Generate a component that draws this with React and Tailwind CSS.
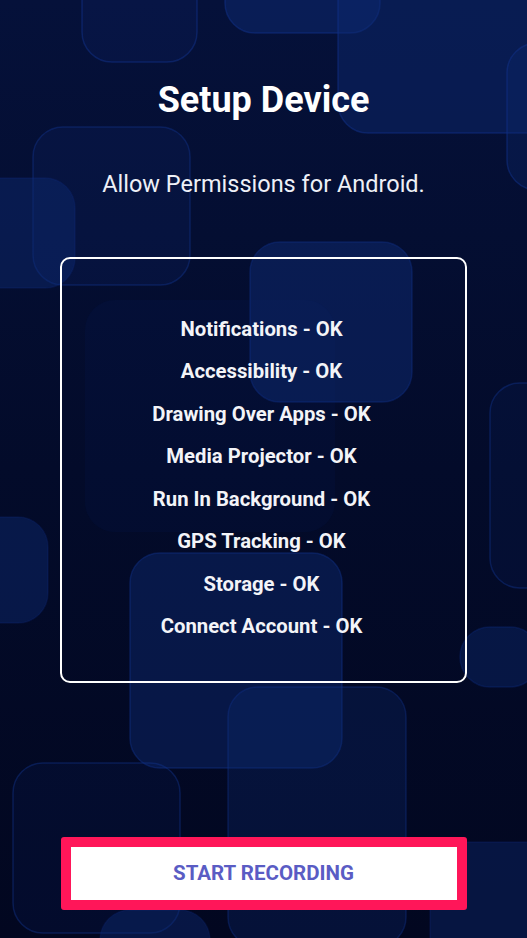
import React from "react";

const permissions = [
  "Notifications",
  "Accessibility",
  "Drawing Over Apps",
  "Media Projector",
  "Run In Background",
  "GPS Tracking",
  "Storage",
  "Connect Account",
];

// decorative rounded squares behind the content
const tiles = [
  { x: 82, y: -40, w: 115, h: 102, o: 0.2, s: 0.5 },
  { x: 225, y: -60, w: 155, h: 93, o: 0.5, s: 0.5 },
  { x: 338, y: -60, w: 240, h: 193, o: 0.45, s: 0.5 },
  { x: 507, y: 43, w: 60, h: 147, o: 0.3, s: 0.5 },
  { x: 33, y: 127, w: 157, h: 158, o: 0.2, s: 0.45 },
  { x: -40, y: 178, w: 115, h: 110, o: 0.45, s: 0.2 },
  { x: 250, y: 242, w: 162, h: 160, o: 0.5, s: 0.4 },
  { x: 85, y: 300, w: 250, h: 232, o: 0.1, s: 0 },
  { x: -40, y: 517, w: 88, h: 106, o: 0.45, s: 0.2 },
  { x: 490, y: 383, w: 70, h: 205, o: 0.15, s: 0.45 },
  { x: 130, y: 553, w: 212, h: 215, o: 0.45, s: 0.45 },
  { x: 460, y: 627, w: 80, h: 60, o: 0.4, s: 0.3 },
  { x: 228, y: 687, w: 178, h: 260, o: 0.3, s: 0.4 },
  { x: 13, y: 763, w: 167, h: 170, o: 0.15, s: 0.45 },
  { x: 430, y: 842, w: 130, h: 130, o: 0.4, s: 0.2 },
  { x: 100, y: 910, w: 110, h: 60, o: 0.45, s: 0.2 },
];

function Backdrop() {
  return (
    <svg
      className="pointer-events-none absolute inset-0 h-full w-full"
      viewBox="0 0 527 938"
      preserveAspectRatio="none"
    >
      <defs>
        <linearGradient id="bg" x1="0" y1="0" x2="0" y2="1">
          <stop offset="0" stopColor="#05113a" />
          <stop offset="0.5" stopColor="#030b2a" />
          <stop offset="1" stopColor="#020720" />
        </linearGradient>
      </defs>
      <rect width="527" height="938" fill="url(#bg)" />
      {tiles.map((t, i) => (
        <rect
          key={i}
          x={t.x}
          y={t.y}
          width={t.w}
          height={t.h}
          rx="30"
          fill="#0d2a72"
          fillOpacity={t.o}
          stroke="#12328a"
          strokeOpacity={t.s}
          strokeWidth="1.5"
        />
      ))}
    </svg>
  );
}

export default function App() {
  return (
    <main
      className="relative h-[938px] w-full overflow-hidden bg-[#030b2a] text-white"
      style={{ fontFamily: "Roboto, 'Noto Sans', sans-serif" }}
    >
      <Backdrop />

      <div className="relative flex flex-col items-center">
        <h1 className="mt-[82px] text-[36px] font-bold leading-none">Setup Device</h1>
        <p className="mt-[55px] text-[23.5px] leading-none text-[#eef0f7]">
          Allow Permissions for Android.
        </p>

        <section className="mt-[60px] h-[426px] w-[407px] rounded-[10px] border-2 border-white pt-[49px]">
          <ul className="text-center">
            {permissions.map((name) => (
              <li key={name} className="pr-[4px] text-[20.3px] font-bold leading-[42.5px] text-[#f3f4f8]">
                {name} - OK
              </li>
            ))}
          </ul>
        </section>

        <button
          type="button"
          className="mt-[154px] h-[73px] w-[406px] rounded-[3px] border-[10px] border-[#ff1659] bg-white text-[20.5px] font-bold text-[#5a5cc4]"
        >
          START RECORDING
        </button>
      </div>
    </main>
  );
}
